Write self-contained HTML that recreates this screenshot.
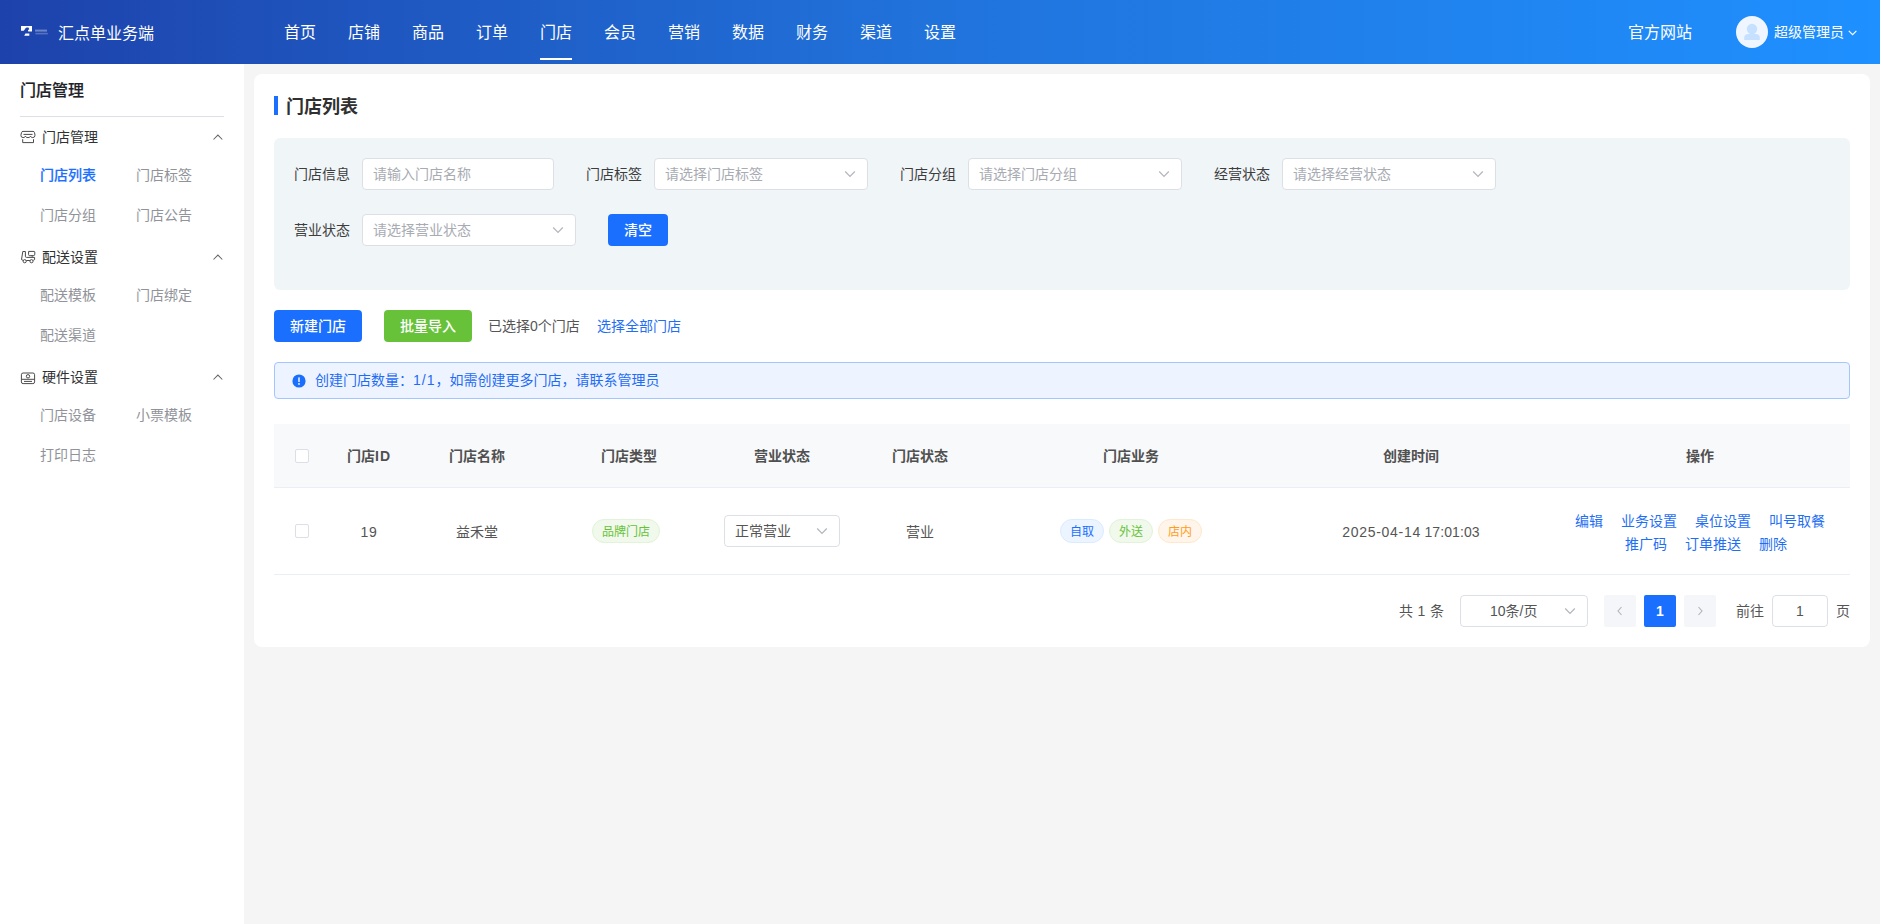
<!DOCTYPE html>
<html lang="zh-CN">
<head>
<meta charset="utf-8">
<title>门店列表</title>
<style>
*{box-sizing:border-box;margin:0;padding:0}
html,body{width:1880px;height:924px;overflow:hidden}
body{position:relative;background:#f5f5f5;font-family:"Liberation Sans","Noto Sans CJK SC",sans-serif;font-size:14px;color:#333;-webkit-font-smoothing:antialiased}
.abs{position:absolute;white-space:nowrap}
.t{position:absolute;white-space:nowrap;height:20px;line-height:20px;font-size:14px}
/* header */
#hd{position:absolute;left:0;top:0;width:1880px;height:64px;background:linear-gradient(90deg,#1e42ab 0%,#1f5bc4 25%,#2173dc 50%,#2082ed 75%,#1e90ff 100%)}
#hd .nav{position:absolute;top:21px;height:24px;line-height:24px;font-size:16px;color:#fff;white-space:nowrap}
/* sidebar */
#sb{position:absolute;left:0;top:64px;width:244px;height:860px;background:#fff}
.g{color:#303133}
.si{color:#909399}
.chev{position:absolute;width:12px;height:8px}
/* main */
#card{position:absolute;left:254px;top:74px;width:1616px;height:573px;background:#fff;border-radius:8px}
#filter{position:absolute;left:274px;top:138px;width:1576px;height:152px;background:#f0f5f8;border-radius:6px}
.lab{color:#3d3d3d}
.inp{position:absolute;height:32px;background:#fff;border:1px solid #dcdfe6;border-radius:4px}
.ph{position:absolute;left:10px;top:5px;height:20px;line-height:20px;font-size:14px;color:#a8abb2;white-space:nowrap}
.btn{position:absolute;height:32px;line-height:32px;border-radius:4px;color:#fff;font-size:14px;text-align:center;font-weight:500}
.th{font-weight:bold;color:#505050;text-align:center}
.c{transform:translateX(-50%)}
.tag{position:absolute;height:24px;line-height:24px;border-radius:12px;border:1px solid;font-size:12px;text-align:center;top:519px}
.lk{color:#1f6ff5}
</style>
</head>
<body>
<!-- HEADER -->
<div id="hd">
  <svg class="abs" style="left:21px;top:26px" width="30" height="11" viewBox="0 0 30 11">
    <path d="M0 0h11v5.5H7.2L7 4.2 8.3 3 7.4 1.6 5.6 1.4 4.3 2.6 3.4 4 2.6 4.8H0z" fill="#fff"/>
    <path d="M3.2 9.8L4.4 7.4h3.9v2.4z" fill="#fff"/>
    <rect x="14" y="3.6" width="12" height="2" fill="#fff" opacity=".35"/>
    <rect x="14.4" y="6.8" width="12.4" height="1.6" fill="#fff" opacity=".25"/>
  </svg>
  <div class="nav" style="left:58px;top:22px">汇点单业务端</div>
  <div class="nav" style="left:284px">首页</div>
  <div class="nav" style="left:348px">店铺</div>
  <div class="nav" style="left:412px">商品</div>
  <div class="nav" style="left:476px">订单</div>
  <div class="nav" style="left:540px">门店</div>
  <div class="nav" style="left:604px">会员</div>
  <div class="nav" style="left:668px">营销</div>
  <div class="nav" style="left:732px">数据</div>
  <div class="nav" style="left:796px">财务</div>
  <div class="nav" style="left:860px">渠道</div>
  <div class="nav" style="left:924px">设置</div>
  <div class="abs" style="left:540px;top:58px;width:32px;height:2px;background:#fff"></div>
  <div class="nav" style="left:1628px">官方网站</div>
  <svg class="abs" style="left:1736px;top:16px" width="32" height="32" viewBox="0 0 32 32">
    <circle cx="16" cy="16" r="16" fill="#f0f6ff"/>
    <circle cx="16" cy="13" r="5.2" fill="#c6e0ff"/>
    <path d="M8.2 24v-2.400c0-2.200 1.700-3.600 3.900-3.600h7.800c2.200 0 3.900 1.400 3.900 3.600V24z" fill="#c6e0ff"/>
  </svg>
  <div class="t" style="left:1774px;top:22px;color:#fff">超级管理员</div>
  <svg class="abs" style="left:1846px;top:28px" width="12" height="8" viewBox="0 0 12 8"><path d="M2.800 2.800L6.600 6.600l3.800-3.800" fill="none" stroke="#fff" stroke-width="1.150"/></svg>
</div>

<!-- SIDEBAR -->
<div id="sb"></div>
<div class="abs" style="left:20px;top:79px;height:24px;line-height:24px;font-size:16px;font-weight:500;-webkit-text-stroke:.18px #1f2329;color:#1f2329">门店管理</div>
<div class="abs" style="left:20px;top:116px;width:204px;height:1px;background:#dcdfe6"></div>

<!-- group 1 -->
<svg class="abs" style="left:20px;top:130px;overflow:visible" width="16" height="14" viewBox="0 0 16 14" fill="none" stroke="#4a4a4a" stroke-width="1">
  <path d="M3 1.400H13Q14.200 1.400 14.500 2.600L15 5.200Q15 7.600 12.800 7.600Q10.900 7.600 10.560 6.200Q10 7.600 7.960 7.600Q5.900 7.600 5.360 6.200Q5 7.600 3.100 7.600Q.9 7.600 .9 5.200L1.500 2.600Q1.800 1.400 3 1.400Z"/>
  <path d="M3.500 4.400h9"/>
  <path d="M2.700 9.200v3.400h10.800V9.200"/>
</svg>
<div class="t g" style="left:42px;top:127px">门店管理</div>
<svg class="chev" style="left:211px;top:133px" viewBox="0 0 12 8"><path d="M2.500 6.500L6.900 2.100l4.400 4.400" fill="none" stroke="#666" stroke-width="1.050"/></svg>
<div class="t" style="left:40px;top:165px;color:#1a6fff;font-weight:500;-webkit-text-stroke:.18px #1a6fff">门店列表</div>
<div class="t si" style="left:136px;top:165px">门店标签</div>
<div class="t si" style="left:40px;top:205px">门店分组</div>
<div class="t si" style="left:136px;top:205px">门店公告</div>

<!-- group 2 -->
<svg class="abs" style="left:20px;top:250px;overflow:visible" width="16" height="14" viewBox="0 0 16 14" fill="none" stroke="#4a4a4a" stroke-width="1">
  <path d="M3 10.300L1.500 9.600 2.800 1.500H5.400V6.300Q5.400 7.400 6.500 7.400H14.600V9.600L13.300 10.300"/>
  <path d="M8.600 1.400H14.200Q14.800 1.400 14.800 2V4.200Q14.800 5.700 13.300 5.700H9.700Q8.600 5.700 8.600 4.600Z"/>
  <path d="M10.500 5.400L13.800 5.400 12.300 6.800Z" fill="#4a4a4a" stroke="none"/>
  <circle cx="4.700" cy="11.200" r="1.600"/>
  <circle cx="11.500" cy="11.200" r="1.600"/>
  <path d="M6.300 10.500H9.900"/>
</svg>
<div class="t g" style="left:42px;top:247px">配送设置</div>
<svg class="chev" style="left:211px;top:253px" viewBox="0 0 12 8"><path d="M2.500 6.500L6.900 2.100l4.400 4.400" fill="none" stroke="#666" stroke-width="1.050"/></svg>
<div class="t si" style="left:40px;top:285px">配送模板</div>
<div class="t si" style="left:136px;top:285px">门店绑定</div>
<div class="t si" style="left:40px;top:325px">配送渠道</div>

<!-- group 3 -->
<svg class="abs" style="left:20px;top:370px;overflow:visible" width="16" height="14" viewBox="0 0 16 14" fill="none" stroke="#4a4a4a" stroke-width="1">
  <rect x="1.400" y="3" width="13.200" height="10.600" rx="1.700"/>
  <circle cx="8" cy="6.300" r="1.700"/>
  <path d="M1.800 9.300H14.200"/>
  <path d="M4 11.400H12"/>
</svg>
<div class="t g" style="left:42px;top:367px">硬件设置</div>
<svg class="chev" style="left:211px;top:373px" viewBox="0 0 12 8"><path d="M2.500 6.500L6.900 2.100l4.400 4.400" fill="none" stroke="#666" stroke-width="1.050"/></svg>
<div class="t si" style="left:40px;top:405px">门店设备</div>
<div class="t si" style="left:136px;top:405px">小票模板</div>
<div class="t si" style="left:40px;top:445px">打印日志</div>

<!-- MAIN CARD -->
<div id="card"></div>
<div class="abs" style="left:274px;top:96px;width:4px;height:19px;background:#1a6fff"></div>
<div class="abs" style="left:286px;top:94px;height:26px;line-height:26px;font-size:18px;font-weight:bold;color:#303030">门店列表</div>

<!-- FILTER -->
<div id="filter"></div>
<div class="t lab" style="left:294px;top:164px">门店信息</div>
<div class="inp" style="left:362px;top:158px;width:192px"><span class="ph">请输入门店名称</span></div>
<div class="t lab" style="left:586px;top:164px">门店标签</div>
<div class="inp" style="left:654px;top:158px;width:214px"><span class="ph">请选择门店标签</span><svg class="chev" style="left:189px;top:11px" viewBox="0 0 12 8"><path d="M1.200 1.500L6 6.300l4.800-4.800" fill="none" stroke="#b2b5bb" stroke-width="1.200"/></svg></div>
<div class="t lab" style="left:900px;top:164px">门店分组</div>
<div class="inp" style="left:968px;top:158px;width:214px"><span class="ph">请选择门店分组</span><svg class="chev" style="left:189px;top:11px" viewBox="0 0 12 8"><path d="M1.200 1.500L6 6.300l4.800-4.800" fill="none" stroke="#b2b5bb" stroke-width="1.200"/></svg></div>
<div class="t lab" style="left:1214px;top:164px">经营状态</div>
<div class="inp" style="left:1282px;top:158px;width:214px"><span class="ph">请选择经营状态</span><svg class="chev" style="left:189px;top:11px" viewBox="0 0 12 8"><path d="M1.200 1.500L6 6.300l4.800-4.800" fill="none" stroke="#b2b5bb" stroke-width="1.200"/></svg></div>
<div class="t lab" style="left:294px;top:220px">营业状态</div>
<div class="inp" style="left:362px;top:214px;width:214px"><span class="ph">请选择营业状态</span><svg class="chev" style="left:189px;top:11px" viewBox="0 0 12 8"><path d="M1.200 1.500L6 6.300l4.800-4.800" fill="none" stroke="#b2b5bb" stroke-width="1.200"/></svg></div>
<div class="btn" style="left:608px;top:214px;width:60px;background:#1a6fff">清空</div>

<!-- ACTIONS -->
<div class="btn" style="left:274px;top:310px;width:88px;background:#1a6fff">新建门店</div>
<div class="btn" style="left:384px;top:310px;width:88px;background:#67c23a">批量导入</div>
<div class="t" style="left:488px;top:316px;color:#555">已选择0个门店</div>
<div class="t lk" style="left:597px;top:316px">选择全部门店</div>

<!-- ALERT -->
<div class="abs" style="left:274px;top:362px;width:1576px;height:37px;background:#eef4ff;border:1px solid #a3c6ff;border-radius:4px"></div>
<svg class="abs" style="left:292px;top:374px" width="14" height="14" viewBox="0 0 14 14"><circle cx="7" cy="7" r="6.600" fill="#1a6fff"/><rect x="6.300" y="3.300" width="1.400" height="4.600" rx=".5" fill="#fff"/><circle cx="7" cy="9.900" r=".9" fill="#fff"/></svg>
<div class="t" style="left:315px;top:370px;color:#1f6cf5">创建门店数量：<span style="letter-spacing:1px">1/1</span>，如需创建更多门店，请联系管理员</div>

<!-- TABLE -->
<div class="abs" style="left:274px;top:424px;width:1576px;height:64px;background:#f8f9fb;border-bottom:1px solid #ebeef5"></div>
<div class="abs" style="left:274px;top:574px;width:1576px;height:1px;background:#ebeef5"></div>
<div class="abs" style="left:295px;top:449px;width:14px;height:14px;border:1px solid #dcdfe6;border-radius:2px;background:#fff"></div>
<div class="abs" style="left:295px;top:524px;width:14px;height:14px;border:1px solid #dcdfe6;border-radius:2px;background:#fff"></div>
<div class="t th c" style="left:369px;top:446px">门店<span style="letter-spacing:.9px">ID</span></div>
<div class="t th c" style="left:477px;top:446px">门店名称</div>
<div class="t th c" style="left:629px;top:446px">门店类型</div>
<div class="t th c" style="left:782px;top:446px">营业状态</div>
<div class="t th c" style="left:920px;top:446px">门店状态</div>
<div class="t th c" style="left:1131px;top:446px">门店业务</div>
<div class="t th c" style="left:1411px;top:446px">创建时间</div>
<div class="t th c" style="left:1700px;top:446px">操作</div>

<div class="t c" style="left:369px;top:522px;color:#555;letter-spacing:.8px">19</div>
<div class="t c" style="left:477px;top:522px;color:#555">益禾堂</div>
<div class="tag" style="left:592px;width:68px;background:#f0f9eb;border-color:#e1f3d8;color:#67c23a">品牌门店</div>
<div class="inp" style="left:724px;top:515px;width:116px"><span class="ph" style="color:#555">正常营业</span><svg class="chev" style="left:91px;top:11px" viewBox="0 0 12 8"><path d="M1.200 1.500L6 6.300l4.800-4.800" fill="none" stroke="#b2b5bb" stroke-width="1.200"/></svg></div>
<div class="t c" style="left:920px;top:522px;color:#555">营业</div>
<div class="tag" style="left:1060px;width:44px;background:#ecf5ff;border-color:#d9ecff;color:#1a6fff">自取</div>
<div class="tag" style="left:1109px;width:44px;background:#f0f9eb;border-color:#e1f3d8;color:#67c23a">外送</div>
<div class="tag" style="left:1158px;width:44px;background:#fff5ea;border-color:#ffe8cc;color:#ff9d23">店内</div>
<div class="t c" style="left:1411px;top:522px;color:#555;word-spacing:-.4px"><span style="letter-spacing:.71px">2025-04-14</span> <span style="letter-spacing:.1px">17:01:03</span></div>

<div class="t lk" style="left:1575px;top:511px">编辑</div>
<div class="t lk" style="left:1621px;top:511px">业务设置</div>
<div class="t lk" style="left:1695px;top:511px">桌位设置</div>
<div class="t lk" style="left:1769px;top:511px">叫号取餐</div>
<div class="t lk" style="left:1625px;top:534px">推广码</div>
<div class="t lk" style="left:1685px;top:534px">订单推送</div>
<div class="t lk" style="left:1759px;top:534px">删除</div>

<!-- PAGINATION -->
<div class="t" style="left:1399px;top:601px;color:#555;word-spacing:.7px">共 1 条</div>
<div class="inp" style="left:1460px;top:595px;width:128px"><span class="ph" style="left:29px;color:#555">10条/页</span><svg class="chev" style="left:103px;top:11px" viewBox="0 0 12 8"><path d="M1.200 1.500L6 6.300l4.800-4.800" fill="none" stroke="#b2b5bb" stroke-width="1.200"/></svg></div>
<div class="abs" style="left:1604px;top:595px;width:32px;height:32px;background:#f5f6fa;border-radius:2px"></div>
<svg class="abs" style="left:1616px;top:605px" width="8" height="12" viewBox="0 0 8 12"><path d="M5.500 2L2 6l3.500 4" fill="none" stroke="#b1b3b8" stroke-width="1.100"/></svg>
<div class="abs" style="left:1644px;top:595px;width:32px;height:32px;background:#1a6fff;border-radius:2px;color:#fff;font-weight:bold;text-align:center;line-height:32px;font-size:14px">1</div>
<div class="abs" style="left:1684px;top:595px;width:32px;height:32px;background:#f5f6fa;border-radius:2px"></div>
<svg class="abs" style="left:1696px;top:605px" width="8" height="12" viewBox="0 0 8 12"><path d="M2.500 2L6 6l-3.500 4" fill="none" stroke="#b1b3b8" stroke-width="1.100"/></svg>
<div class="t" style="left:1736px;top:601px;color:#555">前往</div>
<div class="inp" style="left:1772px;top:595px;width:56px;text-align:center;line-height:30px;color:#555">1</div>
<div class="t" style="left:1836px;top:601px;color:#555">页</div>
</body>
</html>
